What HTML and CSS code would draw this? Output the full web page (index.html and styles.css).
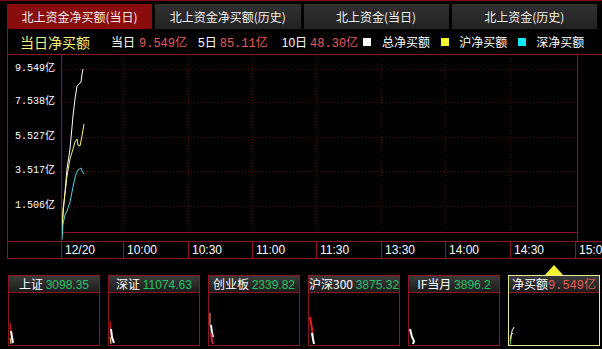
FILE: index.html
```html
<!DOCTYPE html>
<html>
<head>
<meta charset="utf-8">
<link rel="stylesheet" href="styles.css">
</head>
<body>
<div class="tabs">
  <div class="tab active">北上资金净买额(当日)</div>
  <div class="tab">北上资金净买额(历史)</div>
  <div class="tab">北上资金(当日)</div>
  <div class="tab">北上资金(历史)</div>
</div>
<div class="main">
  <div class="legend">
    <span class="title">当日净买额</span>
    <span class="lbl l1">当日</span><span class="val v1">9.549亿</span>
    <span class="lbl l2">5日</span><span class="val v2">85.11亿</span>
    <span class="lbl l3">10日</span><span class="val v2">48.30亿</span>
    <span class="sq white s1"></span><span class="lbl l4">总净买额</span>
    <span class="sq yellow"></span><span class="lbl l5">沪净买额</span>
    <span class="sq cyan"></span><span class="lbl l5">深净买额</span>
  </div>
  <div class="chart">
    <div class="yaxis">
      <span class="ylab y1">9.549亿</span>
      <span class="ylab y2">7.538亿</span>
      <span class="ylab y3">5.527亿</span>
      <span class="ylab y4">3.517亿</span>
      <span class="ylab y5">1.506亿</span>
    </div>
    <div class="plot">
      <svg width="515" height="186" viewBox="0 0 515 186">
        <g stroke="#4a0c10" stroke-width="1" stroke-dasharray="1 2">
          <line x1="0" y1="14.5" x2="515" y2="14.5"/>
          <line x1="0" y1="47.5" x2="515" y2="47.5"/>
          <line x1="0" y1="82.5" x2="515" y2="82.5"/>
          <line x1="0" y1="116.5" x2="515" y2="116.5"/>
          <line x1="0" y1="151.5" x2="515" y2="151.5"/>
          <line x1="61.5" y1="0" x2="61.5" y2="177"/>
          <line x1="126.5" y1="0" x2="126.5" y2="177"/>
          <line x1="190.5" y1="0" x2="190.5" y2="177"/>
          <line x1="254.5" y1="0" x2="254.5" y2="177"/>
          <line x1="319.5" y1="0" x2="319.5" y2="177"/>
          <line x1="383.5" y1="0" x2="383.5" y2="177"/>
          <line x1="448.5" y1="0" x2="448.5" y2="177"/>
        </g>
        <line x1="0" y1="177.5" x2="515" y2="177.5" stroke="#8e1420" stroke-width="1"/>
        <polyline fill="none" stroke="#ffffff" stroke-width="1" points="0,176 1,159 3,137 5,114 8,94 11,61 13,44 15,31 17,29 19,27 20,19 21,14"/>
        <polyline fill="none" stroke="#f2f27a" stroke-width="1" points="0,179 1,154 3,139 5,121 8,104 11,94 13,87 15,84 16,90 18,91 20,81 22,69"/>
        <polyline fill="none" stroke="#4fd8d8" stroke-width="1" points="0,185 1,169 3,160 5,156 8,147 10,137 12,127 14,119 16,115 19,113 20,116 22,119"/>
      </svg>
    </div>
    <div class="rpad"></div>
    <div class="xaxis">
      <div class="xspace"></div>
      <div class="xc w62">12/20</div>
      <div class="xc w65">10:00</div>
      <div class="xc w64">10:30</div>
      <div class="xc w64">11:00</div>
      <div class="xc w65">11:30</div>
      <div class="xc w64">13:30</div>
      <div class="xc w65">14:00</div>
      <div class="xc w65">14:30</div>
      <div class="xc wrest">15:00</div>
    </div>
  </div>
</div>
<div class="cards">
  <div class="card">
    <div class="ch">上证 <span class="g">3098.35</span></div>
    <div class="cb"><svg width="90" height="52"><polyline fill="none" stroke="#e02020" points="1,30 2,40 3,50"/><polyline fill="none" stroke="#fff" stroke-width="2" points="2,38 3,44 4,50"/><polyline fill="none" stroke="#f0e080" points="1,45 2,51"/></svg></div>
  </div>
  <div class="card">
    <div class="ch">深证 <span class="g">11074.63</span></div>
    <div class="cb"><svg width="90" height="52"><polyline fill="none" stroke="#e02020" points="1,28 2,38 3,50"/><polyline fill="none" stroke="#fff" stroke-width="2" points="2,36 3,44 5,50"/><polyline fill="none" stroke="#f0e080" points="1,44 2,51"/></svg></div>
  </div>
  <div class="card">
    <div class="ch">创业板 <span class="g">2339.82</span></div>
    <div class="cb"><svg width="90" height="52"><polyline fill="none" stroke="#f0c060" points="1,20 1,32"/><polyline fill="none" stroke="#fff" stroke-width="2" points="2,32 3,40 4,44"/><polyline fill="none" stroke="#d02040" stroke-width="2" points="2,40 3,48 4,51"/></svg></div>
  </div>
  <div class="card">
    <div class="ch">沪深300 <span class="g">3875.32</span></div>
    <div class="cb"><svg width="90" height="52"><polyline fill="none" stroke="#e02020" stroke-width="2" points="1,24 3,36 4,44"/><polyline fill="none" stroke="#fff" stroke-width="2" points="3,40 4,46 5,51"/></svg></div>
  </div>
  <div class="card">
    <div class="ch">IF当月 <span class="g">3896.2</span></div>
    <div class="cb"><svg width="90" height="52"><polyline fill="none" stroke="#fff" stroke-width="2" points="1,36 3,44 5,48 4,51"/></svg></div>
  </div>
  <div class="card sel">
    <div class="ch">净买额<span class="r">9.549亿</span></div>
    <div class="cb"><svg width="90" height="52"><polyline fill="none" stroke="#fff" points="2,44 3,38 5,34"/><polyline fill="none" stroke="#f0f080" points="1,48 2,42 4,40"/><polyline fill="none" stroke="#60d080" points="1,52 2,46 3,44"/></svg></div>
  </div>
</div>
</body>
</html>
```

FILE: styles.css
```css
* { box-sizing: border-box; }
body {
  margin: 0;
  background: #000;
  color: #fff;
  font-family: "Noto Sans CJK SC", "Liberation Sans", sans-serif;
  width: 602px;
  height: 349px;
  overflow: hidden;
}
.tabs {
  display: flex;
  gap: 3px;
  padding: 3px 5px 0 7px;
  height: 29px;
  border-top: 1px solid #7a0c14;
}
.tab {
  flex: 1;
  height: 25px;
  background: linear-gradient(#303030, #232323);
  font-size: 12px;
  line-height: 25px;
  text-align: center;
  color: #f0f0f0;
}
.tab.active {
  background: #8a0c0c;
}
.main {
  margin-left: 7px;
  border-left: 1px solid #8e1420;
}
.legend {
  display: flex;
  align-items: center;
  height: 26px;
  border-bottom: 1px solid #8e1420;
  font-size: 12px;
  white-space: nowrap;
}
.title {
  margin-left: 12px;
  font-size: 14px;
  color: #f4f478;
}
.lbl { color: #fff; }
.l1 { margin-left: 21px; }
.l2 { margin-left: 11px; font-family: "Liberation Sans", "Noto Sans CJK SC", sans-serif; }
.l3 { margin-left: 14px; font-family: "Liberation Sans", "Noto Sans CJK SC", sans-serif; }
.l4 { margin-left: 11px; }
.l5 { margin-left: 10px; }
.val {
  font-family: "Liberation Mono", "Noto Sans CJK SC", monospace;
  color: #e85a5a;
  font-size: 12px;
}
.v1 { margin-left: 4px; }
.v2 { margin-left: 3px; }
.sq {
  width: 8px;
  height: 8px;
  margin-left: 5px;
}
.sq.yellow { margin-left: 11px; background: #f4f430; }
.sq.cyan { margin-left: 11px; background: #10e8f0; }
.sq.white { background: #fff; }
.chart {
  display: grid;
  grid-template-columns: 54px 516px 1fr;
  grid-template-rows: 186px 18px;
}
.yaxis {
  border-right: 1px solid #8e1420;
  display: flex;
  flex-direction: column;
  align-items: flex-end;
  padding-right: 6px;
  font-family: "Liberation Mono", "Noto Sans CJK SC", monospace;
  font-size: 10px;
  color: #fff;
}
.ylab { height: 14px; line-height: 14px; }
.y1 { margin-top: 7px; }
.y2 { margin-top: 19px; }
.y3 { margin-top: 21px; }
.y4 { margin-top: 20px; }
.y5 { margin-top: 21px; }
.plot {
  border-right: 1px solid #8e1420;
  overflow: hidden;
}
.plot svg { display: block; }
.xaxis {
  grid-column: 1 / 4;
  display: flex;
  border-top: 1px solid #8e1420;
  border-bottom: 1px solid #8e1420;
  font-family: "Liberation Sans", sans-serif;
  font-size: 12px;
  line-height: 16px;
  overflow: hidden;
  white-space: nowrap;
}
.xspace { width: 53px; flex: none; }
.xc {
  flex: none;
  border-left: 1px solid #8e1420;
  padding-left: 3px;
  overflow: hidden;
}
.w62 { width: 62px; }
.w64 { width: 64px; }
.w65 { width: 65px; }
.wrest { flex: 1; }
.cards {
  display: flex;
  gap: 8px;
  padding: 16px 0 0 8px;
}
.card {
  width: 92px;
  height: 71px;
  border: 1px solid #8e1420;
  position: relative;
  flex: none;
}
.card.sel { border-color: #e8e890; }
.card.sel::before {
  content: "";
  position: absolute;
  left: 36px;
  top: -11px;
  border-left: 9px solid transparent;
  border-right: 9px solid transparent;
  border-bottom: 10px solid #f4f430;
}
.ch {
  height: 17px;
  border-bottom: 1px solid #8e1420;
  background: linear-gradient(#3a3a3a, #1c1c1c);
  font-size: 12px;
  line-height: 16px;
  text-align: center;
  white-space: nowrap;
  overflow: hidden;
  color: #fff;
}
.g {
  font-family: "Liberation Sans", sans-serif;
  color: #22c466;
}
.r {
  font-family: "Liberation Mono", "Noto Sans CJK SC", monospace;
  color: #e85a5a;
}
.cb svg { display: block; }
```
